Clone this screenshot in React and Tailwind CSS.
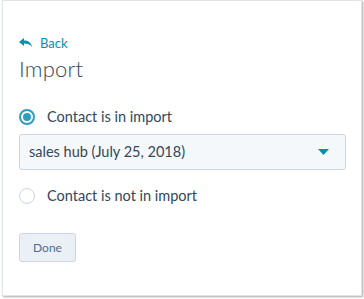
import React, { useState } from 'react';

function Radio({ checked }) {
  return checked ? (
    <span className="w-[16px] h-[16px] rounded-full border-2 border-[#2f9dbb] flex items-center justify-center">
      <span className="w-[8px] h-[8px] rounded-full bg-[#2f9dbb]" />
    </span>
  ) : (
    <span className="w-[16px] h-[16px] rounded-full border-[1.5px] border-[#cbd6e2] bg-white" />
  );
}

export default function App() {
  const [enImport, setEnImport] = useState(true);

  return (
    <div className="w-[364px] h-[299px] bg-white p-[2px] pt-0 pb-[2px]" style={{ fontFamily: 'Lato, "Noto Sans", sans-serif' }}>
      <div className="h-[296px] border border-[#e1e4e8] shadow-[1px_1px_2px_rgba(0,0,0,0.35)] bg-white pl-[16px] pr-[16px] pt-[34px]">
        <a className="flex items-center gap-[8px] text-[#0091ae] text-[13px] leading-[16px] cursor-pointer">
          <svg width="13" height="10" viewBox="0 0 13 10" fill="#0091ae">
            <path d="M0 4 L5 0 L5 2.6 C9 2.6 12 4.5 13 9 C11 6.6 8.5 5.6 5 5.6 L5 8 Z" />
          </svg>
          Back
        </a>
        <h1 className="text-[#33475b] text-[22px] leading-[28px] font-light mt-[4px] tracking-[0.2px]">Import</h1>

        <label className="flex items-center gap-[12px] mt-[24px] cursor-pointer" onClick={() => setEnImport(true)}>
          <Radio checked={enImport} />
          <span className="text-[#33475b] text-[14.5px] leading-[20px]">Contact is in import</span>
        </label>

        <div className="mt-[7px] h-[36px] w-[327px] rounded-[3px] border border-[#cbd6e2] bg-[#f5f8fa] flex items-center justify-between pl-[9px] pr-[16px]">
          <span className="text-[#33475b] text-[14.5px]">sales hub (July 25, 2018)</span>
          <svg width="11" height="6" viewBox="0 0 11 6" fill="#0091ae">
            <path d="M0 0 H11 L5.5 6 Z" />
          </svg>
        </div>

        <label className="flex items-center gap-[12px] mt-[16px] cursor-pointer" onClick={() => setEnImport(false)}>
          <Radio checked={!enImport} />
          <span className="text-[#33475b] text-[14.5px] leading-[20px]">Contact is not in import</span>
        </label>

        <button className="mt-[27px] w-[57px] h-[29px] rounded-[3px] border border-[#cbd6e2] bg-[#eaf0f6] text-[#506e91] text-[12px]">
          Done
        </button>
      </div>
    </div>
  );
}
